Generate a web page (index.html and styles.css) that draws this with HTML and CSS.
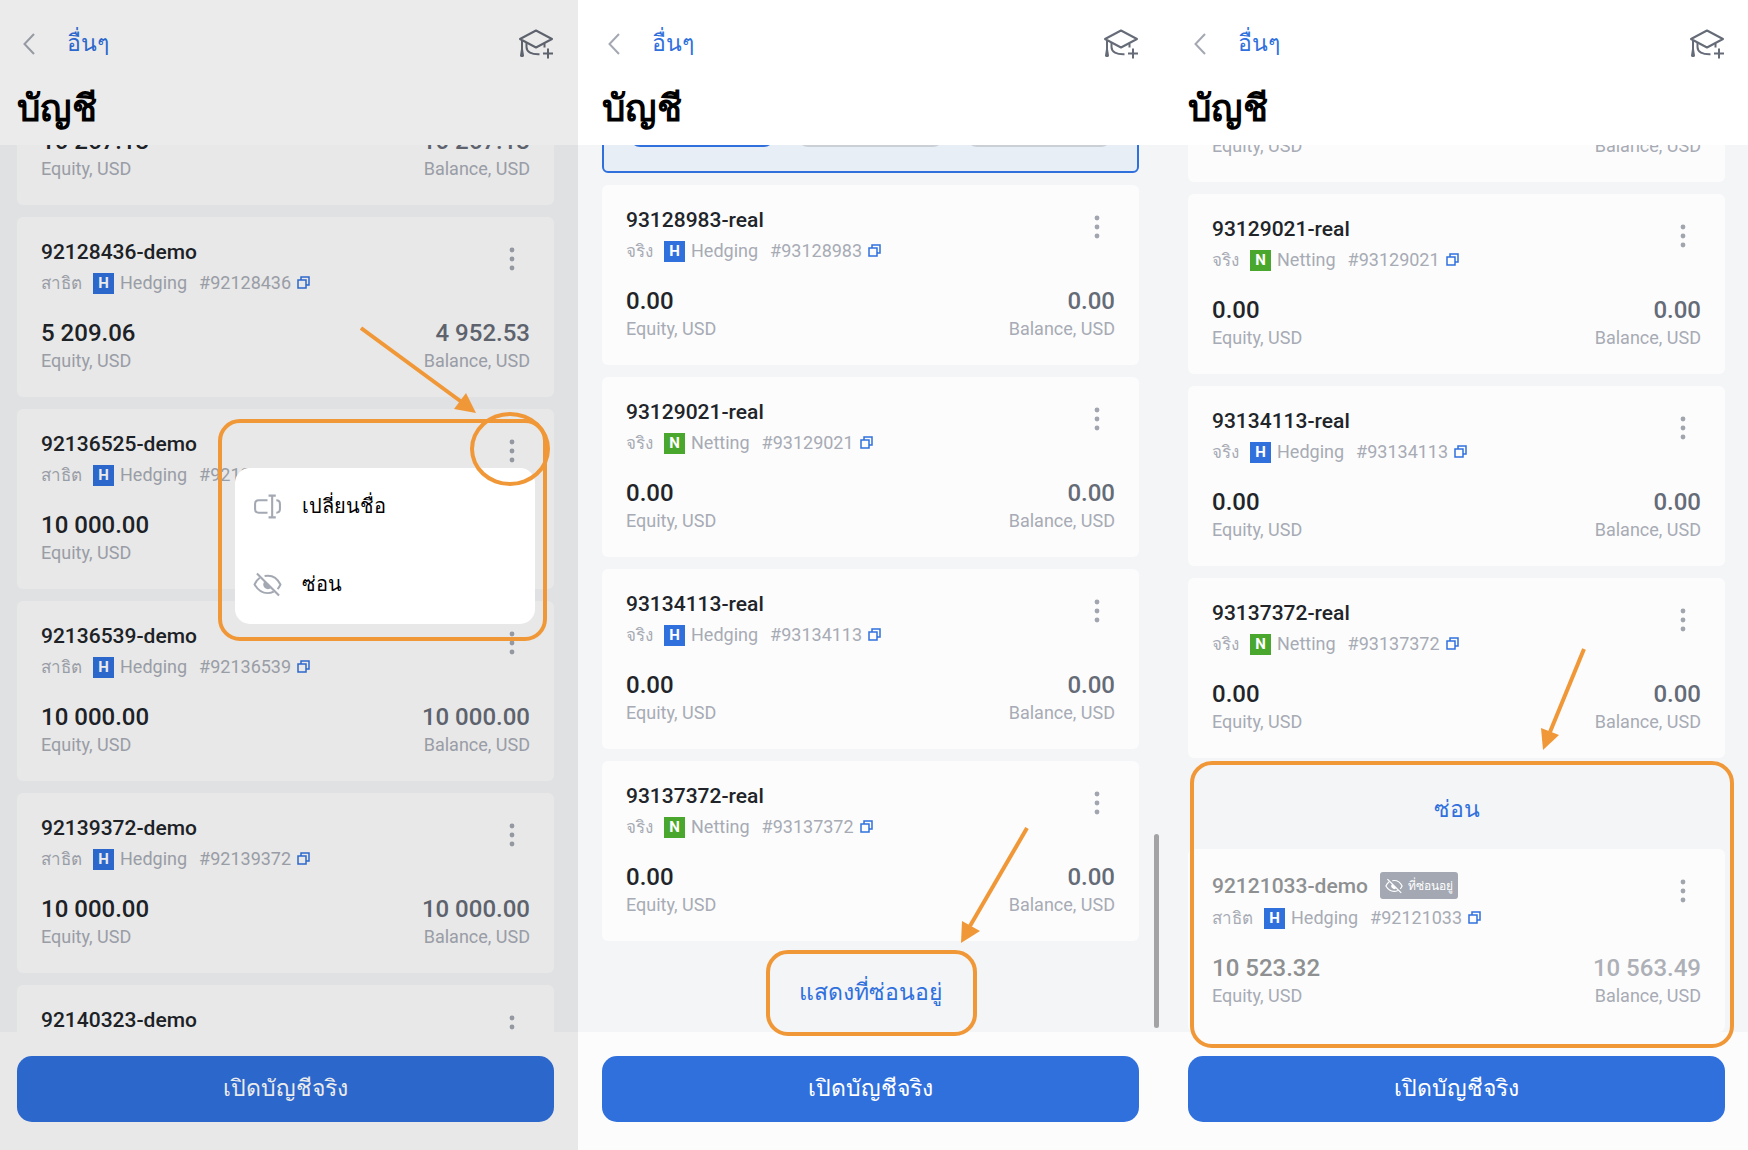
FILE: index.html
```
<!DOCTYPE html>
<html lang="th">
<head>
    <meta charset="UTF-8">
    <meta name="viewport" content="width=device-width, initial-scale=1.0">
    <title>บัญชี</title>
    <link rel="stylesheet" href="styles.css">
</head>
<body>
    <!-- Shared icons -->
    <svg class="sprite" aria-hidden="true">
        <symbol id="icon-back" viewBox="0 0 12 22">
            <path d="M11 1 1.500 11 11 21" fill="none" stroke="currentColor" stroke-width="2"/>
        </symbol>
        <symbol id="icon-learn" viewBox="0 0 36 30">
            <path d="M18 1.500 34 10 18 18.500 2 10Z" fill="none" stroke="currentColor" stroke-width="2" stroke-linejoin="round"/>
            <path d="M4 11v13M8.500 14v4c0 5 5 7.500 13 7.200M26.500 14.500v4M30 19.500v10M25 24.500h10" fill="none" stroke="currentColor" stroke-width="2"/>
            <path d="M3 20h2l1 6.500c0 2-4 2-4 0Z" fill="currentColor"/>
        </symbol>
        <symbol id="icon-dots" viewBox="0 0 6 24">
            <circle cx="3" cy="3" r="2.400"/>
            <circle cx="3" cy="12" r="2.400"/>
            <circle cx="3" cy="21" r="2.400"/>
        </symbol>
        <symbol id="icon-copy" viewBox="0 0 13 13">
            <path d="M4 4V1h8v8H9M1 4h8v8H1Z" fill="none" stroke="currentColor" stroke-width="1.500"/>
        </symbol>
        <symbol id="icon-rename" viewBox="0 0 28 24">
            <path d="M14 6H5.500Q2 6 2 9.500v5Q2 18 5.500 18H14M15 1.500h7M15 22.500h7M18.500 1.500v21M22.500 6Q26 6 26 9.500v5Q26 18 22.500 18" fill="none" stroke="currentColor" stroke-width="2"/>
        </symbol>
        <symbol id="icon-hidden" viewBox="0 0 30 26">
            <path d="M7 6Q3.500 8.500 1.500 13 7 22 15 22q3.500 0 6.500-1.500M12 4.200Q23 2 28.500 13q-1.200 2.700-3 4.700" fill="none" stroke="currentColor" stroke-width="2"/>
            <path d="M12 9.500A4.800 4.800 0 1 0 19 16.500Z" fill="currentColor"/>
            <path d="M4 1.500 27 24.500" stroke="currentColor" stroke-width="2.200"/>
        </symbol>
    </svg>

    <main class="screens">
        <!-- Step 1: account menu -->
        <section class="phone phone-dimmed">
            <header class="topbar">
                <div class="nav">
                    <a class="back" href="#"><svg class="icon-back"><use href="#icon-back"/></svg>อื่นๆ</a>
                    <button class="learn" type="button" aria-label="เรียนรู้"><svg><use href="#icon-learn"/></svg></button>
                </div>
                <h1>บัญชี</h1>
            </header>
            <div class="list">
                <div class="scroll scroll-demo">
                    <article class="card">
                        <div class="card-head">
                            <div>
                                <h2>92121033-demo</h2>
                                <p class="meta"><span class="kind">สาธิต</span><b class="badge">H</b><span class="mode">Hedging</span>#92121033 <button class="copy" type="button" aria-label="คัดลอก"><svg><use href="#icon-copy"/></svg></button></p>
                            </div>
                            <button class="dots" type="button" aria-label="เมนู"><svg><use href="#icon-dots"/></svg></button>
                        </div>
                        <dl class="sums">
                            <div><dd>10 267.13</dd><dt>Equity, USD</dt></div>
                            <div><dd>10 267.13</dd><dt>Balance, USD</dt></div>
                        </dl>
                    </article>
                    <article class="card">
                        <div class="card-head">
                            <div>
                                <h2>92128436-demo</h2>
                                <p class="meta"><span class="kind">สาธิต</span><b class="badge">H</b><span class="mode">Hedging</span>#92128436 <button class="copy" type="button" aria-label="คัดลอก"><svg><use href="#icon-copy"/></svg></button></p>
                            </div>
                            <button class="dots" type="button" aria-label="เมนู"><svg><use href="#icon-dots"/></svg></button>
                        </div>
                        <dl class="sums">
                            <div><dd>5 209.06</dd><dt>Equity, USD</dt></div>
                            <div><dd>4 952.53</dd><dt>Balance, USD</dt></div>
                        </dl>
                    </article>
                    <article class="card">
                        <div class="card-head">
                            <div>
                                <h2>92136525-demo</h2>
                                <p class="meta"><span class="kind">สาธิต</span><b class="badge">H</b><span class="mode">Hedging</span>#92136525 <button class="copy" type="button" aria-label="คัดลอก"><svg><use href="#icon-copy"/></svg></button></p>
                            </div>
                            <button class="dots" type="button" aria-label="เมนู"><svg><use href="#icon-dots"/></svg></button>
                        </div>
                        <dl class="sums">
                            <div><dd>10 000.00</dd><dt>Equity, USD</dt></div>
                            <div><dd>10 000.00</dd><dt>Balance, USD</dt></div>
                        </dl>
                    </article>
                    <article class="card">
                        <div class="card-head">
                            <div>
                                <h2>92136539-demo</h2>
                                <p class="meta"><span class="kind">สาธิต</span><b class="badge">H</b><span class="mode">Hedging</span>#92136539 <button class="copy" type="button" aria-label="คัดลอก"><svg><use href="#icon-copy"/></svg></button></p>
                            </div>
                            <button class="dots" type="button" aria-label="เมนู"><svg><use href="#icon-dots"/></svg></button>
                        </div>
                        <dl class="sums">
                            <div><dd>10 000.00</dd><dt>Equity, USD</dt></div>
                            <div><dd>10 000.00</dd><dt>Balance, USD</dt></div>
                        </dl>
                    </article>
                    <article class="card">
                        <div class="card-head">
                            <div>
                                <h2>92139372-demo</h2>
                                <p class="meta"><span class="kind">สาธิต</span><b class="badge">H</b><span class="mode">Hedging</span>#92139372 <button class="copy" type="button" aria-label="คัดลอก"><svg><use href="#icon-copy"/></svg></button></p>
                            </div>
                            <button class="dots" type="button" aria-label="เมนู"><svg><use href="#icon-dots"/></svg></button>
                        </div>
                        <dl class="sums">
                            <div><dd>10 000.00</dd><dt>Equity, USD</dt></div>
                            <div><dd>10 000.00</dd><dt>Balance, USD</dt></div>
                        </dl>
                    </article>
                    <article class="card">
                        <div class="card-head">
                            <div>
                                <h2>92140323-demo</h2>
                            </div>
                            <button class="dots" type="button" aria-label="เมนู"><svg><use href="#icon-dots"/></svg></button>
                        </div>
                    </article>
                </div>
            </div>
            <footer class="bottombar"><button class="open" type="button">เปิดบัญชีจริง</button></footer>

            <div class="menu">
                <button type="button"><svg><use href="#icon-rename"/></svg>เปลี่ยนชื่อ</button>
                <button type="button"><svg><use href="#icon-hidden"/></svg>ซ่อน</button>
            </div>
            <div class="frame frame-menu"></div>
            <div class="frame frame-dots"></div>
            <svg class="arrow arrow-dots" viewBox="0 0 116 87">
                <path d="M1 2 103 77" fill="none" stroke="currentColor" stroke-width="4"/>
                <path d="M116 87 94 83 106 67Z" fill="currentColor"/>
            </svg>
        </section>

        <!-- Step 2: show hidden accounts -->
        <section class="phone">
            <header class="topbar">
                <div class="nav">
                    <a class="back" href="#"><svg class="icon-back"><use href="#icon-back"/></svg>อื่นๆ</a>
                    <button class="learn" type="button" aria-label="เรียนรู้"><svg><use href="#icon-learn"/></svg></button>
                </div>
                <h1>บัญชี</h1>
            </header>
            <div class="list">
                <div class="scroll scroll-real">
                    <div class="selected">
                        <span class="chip chip-main"></span>
                        <span class="chip"></span>
                        <span class="chip"></span>
                    </div>
                    <article class="card">
                        <div class="card-head">
                            <div>
                                <h2>93128983-real</h2>
                                <p class="meta"><span class="kind">จริง</span><b class="badge">H</b><span class="mode">Hedging</span>#93128983 <button class="copy" type="button" aria-label="คัดลอก"><svg><use href="#icon-copy"/></svg></button></p>
                            </div>
                            <button class="dots" type="button" aria-label="เมนู"><svg><use href="#icon-dots"/></svg></button>
                        </div>
                        <dl class="sums">
                            <div><dd>0.00</dd><dt>Equity, USD</dt></div>
                            <div><dd>0.00</dd><dt>Balance, USD</dt></div>
                        </dl>
                    </article>
                    <article class="card">
                        <div class="card-head">
                            <div>
                                <h2>93129021-real</h2>
                                <p class="meta"><span class="kind">จริง</span><b class="badge badge-netting">N</b><span class="mode">Netting</span>#93129021 <button class="copy" type="button" aria-label="คัดลอก"><svg><use href="#icon-copy"/></svg></button></p>
                            </div>
                            <button class="dots" type="button" aria-label="เมนู"><svg><use href="#icon-dots"/></svg></button>
                        </div>
                        <dl class="sums">
                            <div><dd>0.00</dd><dt>Equity, USD</dt></div>
                            <div><dd>0.00</dd><dt>Balance, USD</dt></div>
                        </dl>
                    </article>
                    <article class="card">
                        <div class="card-head">
                            <div>
                                <h2>93134113-real</h2>
                                <p class="meta"><span class="kind">จริง</span><b class="badge">H</b><span class="mode">Hedging</span>#93134113 <button class="copy" type="button" aria-label="คัดลอก"><svg><use href="#icon-copy"/></svg></button></p>
                            </div>
                            <button class="dots" type="button" aria-label="เมนู"><svg><use href="#icon-dots"/></svg></button>
                        </div>
                        <dl class="sums">
                            <div><dd>0.00</dd><dt>Equity, USD</dt></div>
                            <div><dd>0.00</dd><dt>Balance, USD</dt></div>
                        </dl>
                    </article>
                    <article class="card">
                        <div class="card-head">
                            <div>
                                <h2>93137372-real</h2>
                                <p class="meta"><span class="kind">จริง</span><b class="badge badge-netting">N</b><span class="mode">Netting</span>#93137372 <button class="copy" type="button" aria-label="คัดลอก"><svg><use href="#icon-copy"/></svg></button></p>
                            </div>
                            <button class="dots" type="button" aria-label="เมนู"><svg><use href="#icon-dots"/></svg></button>
                        </div>
                        <dl class="sums">
                            <div><dd>0.00</dd><dt>Equity, USD</dt></div>
                            <div><dd>0.00</dd><dt>Balance, USD</dt></div>
                        </dl>
                    </article>
                    <button class="toggle" type="button">แสดงที่ซ่อนอยู่</button>
                </div>
            </div>
            <footer class="bottombar"><button class="open" type="button">เปิดบัญชีจริง</button></footer>

            <div class="thumb"></div>
            <div class="frame frame-toggle"></div>
            <svg class="arrow arrow-toggle" viewBox="0 0 68 116">
                <path d="M66 1 9 99" fill="none" stroke="currentColor" stroke-width="4"/>
                <path d="M0 116 1 94 19 104Z" fill="currentColor"/>
            </svg>
        </section>

        <!-- Step 3: hidden accounts are listed -->
        <section class="phone phone-last">
            <header class="topbar">
                <div class="nav">
                    <a class="back" href="#"><svg class="icon-back"><use href="#icon-back"/></svg>อื่นๆ</a>
                    <button class="learn" type="button" aria-label="เรียนรู้"><svg><use href="#icon-learn"/></svg></button>
                </div>
                <h1>บัญชี</h1>
            </header>
            <div class="list">
                <div class="scroll scroll-hidden">
                    <article class="card">
                        <div class="card-head">
                            <div>
                                <h2>93128983-real</h2>
                                <p class="meta"><span class="kind">จริง</span><b class="badge">H</b><span class="mode">Hedging</span>#93128983 <button class="copy" type="button" aria-label="คัดลอก"><svg><use href="#icon-copy"/></svg></button></p>
                            </div>
                            <button class="dots" type="button" aria-label="เมนู"><svg><use href="#icon-dots"/></svg></button>
                        </div>
                        <dl class="sums">
                            <div><dd>0.00</dd><dt>Equity, USD</dt></div>
                            <div><dd>0.00</dd><dt>Balance, USD</dt></div>
                        </dl>
                    </article>
                    <article class="card">
                        <div class="card-head">
                            <div>
                                <h2>93129021-real</h2>
                                <p class="meta"><span class="kind">จริง</span><b class="badge badge-netting">N</b><span class="mode">Netting</span>#93129021 <button class="copy" type="button" aria-label="คัดลอก"><svg><use href="#icon-copy"/></svg></button></p>
                            </div>
                            <button class="dots" type="button" aria-label="เมนู"><svg><use href="#icon-dots"/></svg></button>
                        </div>
                        <dl class="sums">
                            <div><dd>0.00</dd><dt>Equity, USD</dt></div>
                            <div><dd>0.00</dd><dt>Balance, USD</dt></div>
                        </dl>
                    </article>
                    <article class="card">
                        <div class="card-head">
                            <div>
                                <h2>93134113-real</h2>
                                <p class="meta"><span class="kind">จริง</span><b class="badge">H</b><span class="mode">Hedging</span>#93134113 <button class="copy" type="button" aria-label="คัดลอก"><svg><use href="#icon-copy"/></svg></button></p>
                            </div>
                            <button class="dots" type="button" aria-label="เมนู"><svg><use href="#icon-dots"/></svg></button>
                        </div>
                        <dl class="sums">
                            <div><dd>0.00</dd><dt>Equity, USD</dt></div>
                            <div><dd>0.00</dd><dt>Balance, USD</dt></div>
                        </dl>
                    </article>
                    <article class="card">
                        <div class="card-head">
                            <div>
                                <h2>93137372-real</h2>
                                <p class="meta"><span class="kind">จริง</span><b class="badge badge-netting">N</b><span class="mode">Netting</span>#93137372 <button class="copy" type="button" aria-label="คัดลอก"><svg><use href="#icon-copy"/></svg></button></p>
                            </div>
                            <button class="dots" type="button" aria-label="เมนู"><svg><use href="#icon-dots"/></svg></button>
                        </div>
                        <dl class="sums">
                            <div><dd>0.00</dd><dt>Equity, USD</dt></div>
                            <div><dd>0.00</dd><dt>Balance, USD</dt></div>
                        </dl>
                    </article>
                    <button class="toggle" type="button">ซ่อน</button>
                    <article class="card card-hidden">
                        <div class="card-head">
                            <div>
                                <h2>92121033-demo <span class="tag"><svg><use href="#icon-hidden"/></svg>ที่ซ่อนอยู่</span></h2>
                                <p class="meta"><span class="kind">สาธิต</span><b class="badge">H</b><span class="mode">Hedging</span>#92121033 <button class="copy" type="button" aria-label="คัดลอก"><svg><use href="#icon-copy"/></svg></button></p>
                            </div>
                            <button class="dots" type="button" aria-label="เมนู"><svg><use href="#icon-dots"/></svg></button>
                        </div>
                        <dl class="sums">
                            <div><dd>10 523.32</dd><dt>Equity, USD</dt></div>
                            <div><dd>10 563.49</dd><dt>Balance, USD</dt></div>
                        </dl>
                    </article>
                </div>
            </div>
            <footer class="bottombar"><button class="open" type="button">เปิดบัญชีจริง</button></footer>

            <div class="frame frame-hidden"></div>
            <svg class="arrow arrow-hidden" viewBox="0 0 45 102">
                <path d="M43 1 9 84" fill="none" stroke="currentColor" stroke-width="4"/>
                <path d="M2 102 0 80 18 87Z" fill="currentColor"/>
            </svg>
        </section>
    </main>
</body>
</html>
```
FILE: styles.css
```
* {
    box-sizing: border-box;
}
body {
    margin: 0;
    font-family: Roboto, "Noto Sans", sans-serif;
    color: #212429;
    background-color: #fff;
}
h1, h2, p, dl, dd {
    margin: 0;
}
button {
    margin: 0;
    padding: 0;
    border: none;
    background: none;
    font-family: inherit;
    cursor: pointer;
}
svg {
    display: block;
}
.sprite {
    position: absolute;
    width: 0;
    height: 0;
}
.screens {
    display: grid;
    grid-template-columns: 578fr 585fr 585fr;
    height: 100vh;
}
.phone {
    position: relative;
    display: flex;
    flex-direction: column;
    min-width: 0;
    height: 100vh;
    overflow: hidden;
    background-color: #f3f5f7;
}
.phone-dimmed .topbar,
.phone-dimmed .list,
.phone-dimmed .bottombar {
    padding-left: 17px;
}
.phone-last .topbar,
.phone-last .list,
.phone-last .bottombar {
    padding-left: 25px;
    padding-right: 23px;
}
/* shade behind the open menu */
.phone-dimmed::after {
    content: "";
    position: absolute;
    inset: 0;
    background-color: rgba(0, 0, 0, 0.08);
}

/* Top bar */
.topbar {
    flex: none;
    height: 145px;
    padding: 24px 24px 0;
    background-color: #fff;
}
.nav {
    display: flex;
    justify-content: space-between;
    align-items: center;
    height: 40px;
}
.back {
    display: flex;
    align-items: center;
    gap: 32px;
    padding-left: 6px;
    font-size: 23px;
    line-height: 40px;
    color: #3070dd;
    text-decoration: none;
}
.icon-back {
    width: 12px;
    height: 22px;
    color: #a3a8b2;
}
.learn svg {
    width: 36px;
    height: 30px;
    color: #656b77;
}
h1 {
    padding-top: 19px;
    font-size: 37px;
    line-height: 52px;
    font-weight: bold;
    color: #000;
}

/* Account list */
.list {
    flex: 1;
    min-height: 0;
    padding: 0 24px;
    overflow: hidden;
}
.scroll {
    display: flex;
    flex-direction: column;
    gap: 12px;
}
.scroll-demo {
    margin-top: -120px;
}
.scroll-real {
    margin-top: -32px;
}
.scroll-hidden {
    margin-top: -143px;
}
.card {
    padding: 22px 24px 24px;
    border-radius: 6px;
    background-color: #fcfcfc;
}
.card-head {
    display: flex;
    justify-content: space-between;
    align-items: flex-start;
}
h2 {
    display: flex;
    align-items: center;
    gap: 12px;
    min-height: 26px;
    font-size: 21px;
    line-height: 26px;
    font-weight: 500;
}
.meta {
    display: flex;
    align-items: center;
    height: 24px;
    margin-top: 6px;
    font-size: 18px;
    line-height: 24px;
    color: #a7abb5;
}
.kind {
    margin-right: 11px;
    font-size: 17px;
}
.badge {
    width: 21px;
    margin-right: 6px;
    font-size: 15px;
    line-height: 21px;
    text-align: center;
    color: #fff;
    background-color: #3070dd;
}
.badge-netting {
    background-color: #4aa72e;
}
.mode {
    margin-right: 12px;
}
.copy {
    margin-left: 6px;
    padding-bottom: 2px;
    color: #3070dd;
}
.copy svg {
    width: 13px;
    height: 13px;
}
.dots {
    display: flex;
    justify-content: center;
    align-items: center;
    width: 24px;
    height: 40px;
    margin-right: 6px;
    color: #a0a5af;
}
.dots svg {
    width: 6px;
    height: 24px;
    fill: currentColor;
}
.sums {
    display: flex;
    justify-content: space-between;
    margin-top: 22px;
}
.sums div {
    display: flex;
    flex-direction: column;
}
.sums div:last-child {
    text-align: right;
}
.sums dd {
    font-size: 24px;
    line-height: 32px;
    font-weight: 500;
}
.sums div:last-child dd {
    color: #656b77;
}
.sums dt {
    font-size: 18px;
    line-height: 24px;
    color: #a7abb5;
}
.selected {
    display: flex;
    justify-content: space-between;
    align-items: flex-start;
    height: 60px;
    padding: 0 26px;
    border: 2px solid #3070dd;
    border-radius: 6px;
    background-color: #e7eef6;
}
.chip {
    width: 30%;
    height: 32px;
    border: 2px solid #cbd0d6;
    border-radius: 10px;
    background-color: #e7eef6;
}
.chip-main {
    border-color: #3070dd;
    background-color: #3070dd;
}
.toggle {
    height: 91px;
    margin: -12px auto;
    padding: 10px 24px 0;
    font-size: 23px;
    color: #3070dd;
}
.card-hidden h2 {
    min-height: 29px;
    color: #8e9092;
}
.card-hidden .sums dd,
.card-hidden .sums div:last-child dd {
    color: #adb0b7;
}
.card-hidden .sums div:first-child dd {
    color: #8e9092;
}
.tag {
    display: flex;
    align-items: center;
    gap: 5px;
    height: 27px;
    padding: 0 5px;
    border-radius: 3px;
    font-size: 12px;
    font-weight: 500;
    color: #fff;
    background-color: #a3a8b2;
}
.tag svg {
    width: 18px;
    height: 16px;
}

/* Bottom bar */
.bottombar {
    flex: none;
    height: 118px;
    padding: 24px 24px 0;
    background-color: #fcfcfc;
}
.open {
    display: block;
    width: 100%;
    height: 66px;
    padding-bottom: 2px;
    border-radius: 15px;
    font-size: 23px;
    color: #fff;
    background-color: #3070dd;
}

/* Overlays */
.menu {
    position: absolute;
    z-index: 1;
    top: 468px;
    right: 43px;
    width: 300px;
    border-radius: 15px;
    background-color: #fff;
}
.menu button {
    display: flex;
    align-items: center;
    gap: 20px;
    width: 100%;
    height: 78px;
    padding: 0 18px 2px;
    font-size: 20px;
    color: #000;
}
.menu svg {
    width: 29px;
    height: 25px;
    color: #a3a8b2;
}
.thumb {
    position: absolute;
    top: 834px;
    right: 4px;
    width: 5px;
    height: 194px;
    border-radius: 3px;
    background-color: #a3a3a5;
}
.frame {
    position: absolute;
    z-index: 2;
    border: 4px solid #f09838;
    border-radius: 22px;
    pointer-events: none;
}
.frame-menu {
    top: 419px;
    right: 31px;
    width: 329px;
    height: 222px;
}
.frame-dots {
    top: 412px;
    right: 28px;
    width: 80px;
    height: 74px;
    border-radius: 50%;
}
.frame-toggle {
    top: 950px;
    left: 50%;
    width: 211px;
    height: 86px;
    margin-left: -105px;
}
.frame-hidden {
    top: 761px;
    left: 27px;
    right: 14px;
    height: 287px;
}
.arrow {
    position: absolute;
    z-index: 2;
    color: #f09838;
}
.arrow-dots {
    top: 326px;
    right: 102px;
    width: 116px;
}
.arrow-toggle {
    top: 827px;
    right: 134px;
    width: 68px;
}
.arrow-hidden {
    top: 648px;
    right: 162px;
    width: 45px;
}
```
